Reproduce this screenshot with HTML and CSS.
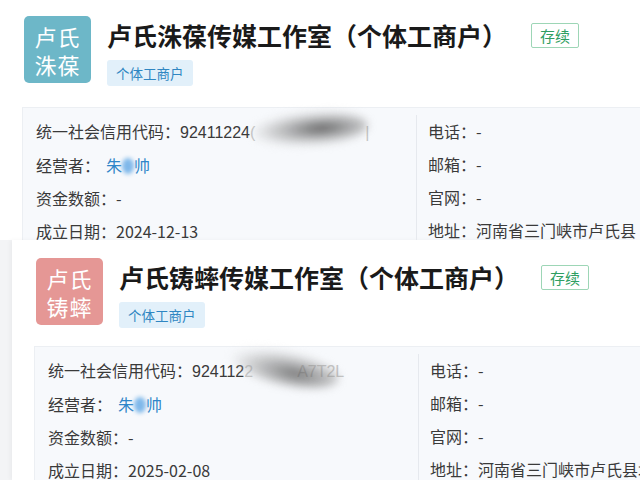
FILE: index.html
```html
<!DOCTYPE html>
<html lang="zh-CN">
<head>
    <meta charset="UTF-8">
    <title>企业信息</title>
    <link rel="stylesheet" href="styles.css">
</head>
<body>
    <div class="shot shot-first">
        <div class="header">
            <div class="logo logo-teal">卢氏<br>洙葆</div>
            <div class="head-text">
                <div class="title-row">
                    <h1 class="title">卢氏洙葆传媒工作室（个体工商户）</h1>
                    <span class="status">存续</span>
                </div>
                <span class="type-tag">个体工商户</span>
            </div>
        </div>
        <div class="info info-first">
            <div class="info-col info-left">
                <div class="row">统一社会信用代码：<span class="code">92411224<span class="fade">(</span><span class="smudge smudge-dark"></span><span class="fade tail">|</span></span></div>
                <div class="row">经营者：<span class="person">朱<span class="blot"></span>帅</span></div>
                <div class="row">资金数额：-</div>
                <div class="row">成立日期：2024-12-13</div>
            </div>
            <div class="info-col info-right">
                <div class="row">电话：-</div>
                <div class="row">邮箱：-</div>
                <div class="row">官网：-</div>
                <div class="row">地址：河南省三门峡市卢氏县</div>
            </div>
        </div>
    </div>

    <div class="shot-wrap">
        <div class="shot shot-second">
            <div class="header">
                <div class="logo logo-red">卢氏<br>铸蟀</div>
                <div class="head-text">
                    <div class="title-row">
                        <h1 class="title">卢氏铸蟀传媒工作室（个体工商户）</h1>
                        <span class="status">存续</span>
                    </div>
                    <span class="type-tag">个体工商户</span>
                </div>
            </div>
            <div class="info info-second">
                <div class="info-col info-left">
                    <div class="row">统一社会信用代码：<span class="code">924112<span class="fade">2</span><span class="smudge smudge-light"></span><span class="fade tail-text">A7T2L</span></span></div>
                    <div class="row">经营者：<span class="person">朱<span class="blot"></span>帅</span></div>
                    <div class="row">资金数额：-</div>
                    <div class="row">成立日期：2025-02-08</div>
                </div>
                <div class="info-col info-right">
                    <div class="row">电话：-</div>
                    <div class="row">邮箱：-</div>
                    <div class="row">官网：-</div>
                    <div class="row">地址：河南省三门峡市卢氏县城</div>
                </div>
            </div>
        </div>
    </div>
</body>
</html>
```

FILE: styles.css
```css
body {
    margin: 0;
    background: #ffffff;
    color: #333333;
    font-family: "Noto Sans CJK SC", "Noto Sans", sans-serif;
    overflow: hidden;
    width: 640px;
    height: 480px;
}

.shot {
    background: #ffffff;
    overflow: hidden;
}

.shot-first {
    height: 240px;
    padding: 16px 0 0 24px;
    box-sizing: border-box;
}

.shot-wrap {
    background: #f3f4f6;
    padding-left: 12px;
    height: 240px;
}

.shot-second {
    height: 240px;
    padding: 18px 0 0 24px;
    box-sizing: border-box;
    box-shadow: -2px 0 4px rgba(0, 0, 0, 0.04);
}

.header {
    display: flex;
    gap: 16px;
}

.logo {
    width: 67px;
    height: 67px;
    border-radius: 5px;
    color: #ffffff;
    font-size: 22px;
    line-height: 28px;
    text-align: center;
    padding-top: 6px;
    box-sizing: border-box;
    letter-spacing: 1px;
}

.logo-teal {
    background: #6db7c8;
}

.logo-red {
    background: #e59795;
}

.head-text {
    display: flex;
    flex-direction: column;
    align-items: flex-start;
}

.title-row {
    display: flex;
    align-items: center;
    gap: 24px;
    height: 38px;
}

.title {
    margin: 0;
    font-size: 25px;
    font-weight: 600;
    color: #1a1a1a;
    white-space: nowrap;
}

.shot-second .title-row {
    gap: 22px;
}

.status {
    border: 1px solid #9dd6b6;
    color: #2f9e62;
    font-size: 15px;
    line-height: 23px;
    padding: 0 8px;
    border-radius: 2px;
}

.type-tag {
    margin-top: 6px;
    background: #e2f0fa;
    color: #2f86c2;
    font-size: 13.5px;
    line-height: 26px;
    padding: 0 9px;
    border-radius: 3px;
}

.info {
    display: flex;
    margin-left: -2px;
    background: #f7f9fc;
    border: 1px solid #eceff3;
    border-right: none;
    padding-top: 7px;
    padding-bottom: 20px;
}

.info-first {
    margin-top: 21px;
}

.info-second {
    margin-top: 18px;
}

.info-col {
    display: flex;
    flex-direction: column;
}

.info-left {
    flex-shrink: 0;
    padding-left: 13px;
    border-right: 1px solid #e6e9ee;
}

.info-first .info-left {
    width: 380px;
}

.info-second .info-left {
    width: 370px;
}

.info-right {
    padding-left: 11px;
    white-space: nowrap;
}

.row {
    font-size: 16px;
    line-height: 33px;
    color: #3a3a3a;
    white-space: nowrap;
}

.code {
    position: relative;
    font-family: "Liberation Sans", "Noto Sans", sans-serif;
}

.fade {
    color: #c4c4c4;
}

.tail {
    margin-left: 110px;
}

.tail-text {
    margin-left: 44px;
}

.smudge {
    position: absolute;
    top: -12px;
    height: 34px;
    border-radius: 50%;
    filter: blur(4px);
}

.smudge-dark {
    left: 72px;
    width: 116px;
    background: radial-gradient(ellipse at 60% 50%, rgba(70, 70, 70, 0.85) 0%, rgba(120, 120, 120, 0.55) 35%, rgba(200, 200, 200, 0.3) 65%, rgba(255, 255, 255, 0) 80%);
    transform: rotate(-4deg);
}

.smudge-light {
    left: 38px;
    width: 110px;
    background: radial-gradient(ellipse at 60% 60%, rgba(90, 90, 90, 0.8) 0%, rgba(140, 140, 140, 0.5) 40%, rgba(210, 210, 210, 0.3) 65%, rgba(255, 255, 255, 0) 80%);
    transform: rotate(12deg);
}

.person {
    color: #2f86c9;
    margin-left: 6px;
    position: relative;
}

.blot {
    display: inline-block;
    width: 12px;
    height: 16px;
    vertical-align: -2px;
    border-radius: 50%;
    background: #7fb8ea;
    filter: blur(2px);
}
```
